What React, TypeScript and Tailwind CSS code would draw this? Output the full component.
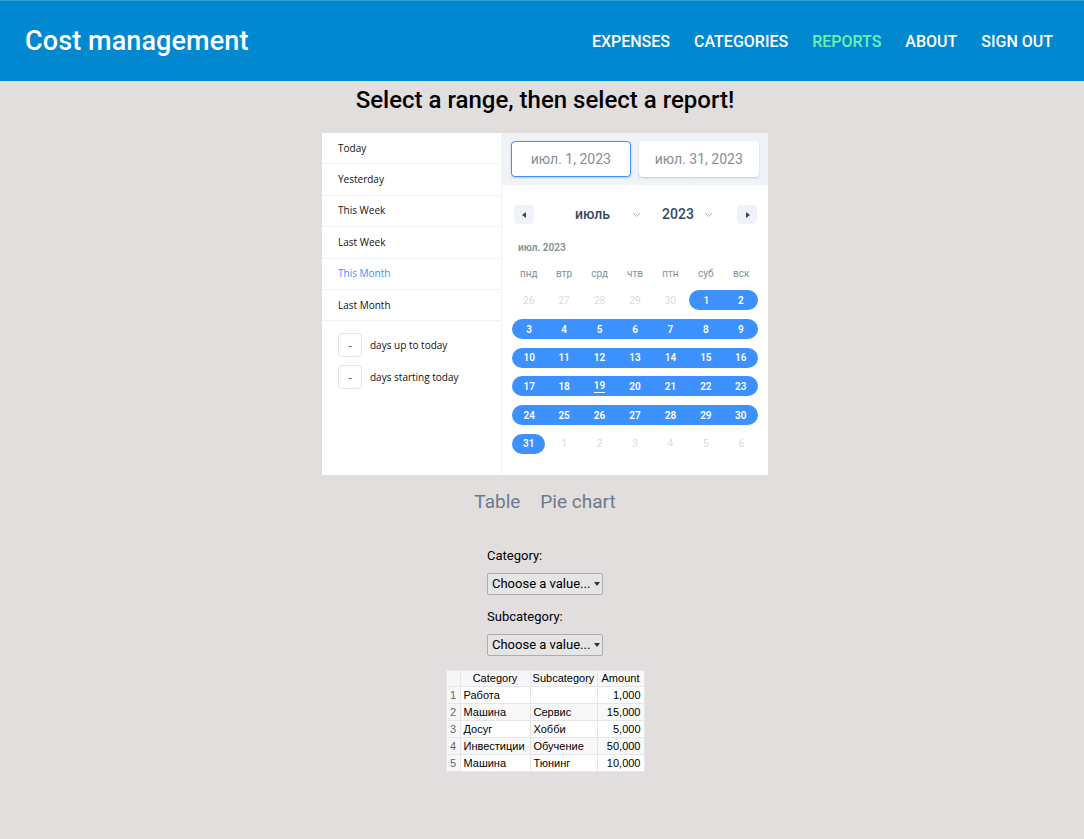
import React, { FC } from "react";

const navItems = ["EXPENSES", "CATEGORIES", "REPORTS", "ABOUT", "SIGN OUT"];
const staticRanges = ["Today", "Yesterday", "This Week", "Last Week", "This Month", "Last Month"];
const weekDays = ["пнд", "втр", "срд", "чтв", "птн", "суб", "вск"];

const rows = [
  { n: 1, cat: "Работа", sub: "", amount: "1,000" },
  { n: 2, cat: "Машина", sub: "Сервис", amount: "15,000" },
  { n: 3, cat: "Досуг", sub: "Хобби", amount: "5,000" },
  { n: 4, cat: "Инвестиции", sub: "Обучение", amount: "50,000" },
  { n: 5, cat: "Машина", sub: "Тюнинг", amount: "10,000" },
];

// 6 weeks, first week starts on jun 26
const days: { d: number; inMonth: boolean }[] = [];
for (let i = 26; i <= 30; i++) days.push({ d: i, inMonth: false });
for (let i = 1; i <= 31; i++) days.push({ d: i, inMonth: true });
for (let i = 1; i <= 6; i++) days.push({ d: i, inMonth: false });

const Header: FC = () => (
  <header className="h-[81px] bg-[#0288d1] border-t border-[#3aa3dc] flex items-center justify-between pl-[25px] pr-[31px]">
    <h1 className="text-white text-[27px] font-medium tracking-[0.1px]">Cost management</h1>
    <nav className="flex gap-[24px] pt-[1px]">
      {navItems.map((item) => (
        <span
          key={item}
          className={`text-[16px] font-medium ${item === "REPORTS" ? "text-[#69f0ae]" : "text-white"}`}
        >
          {item}
        </span>
      ))}
    </nav>
  </header>
);

const Arrow: FC<{ dir: "left" | "right" }> = ({ dir }) => (
  <div className="w-[20px] h-[19px] shrink-0 rounded-[4px] bg-[#eff2f7] flex items-center justify-center">
    <svg width="5" height="6" viewBox="0 0 5 6">
      {dir === "left" ? <path d="M4 0 L0 3 L4 6 Z" fill="#34495e" /> : <path d="M1 0 L5 3 L1 6 Z" fill="#34495e" />}
    </svg>
  </div>
);

const Chevron: FC<{ className: string }> = ({ className }) => (
  <svg width="9" height="6" viewBox="0 0 9 6" className={className}>
    <path d="M1 1 L4.5 4.5 L8 1" stroke="#a4aeb8" strokeWidth="1" fill="none" />
  </svg>
);

const Calendar: FC = () => (
  <div className="w-[266px] shrink-0 flex flex-col">
    <div className="h-[52px] bg-[#eff2f7] flex items-center gap-[8px] px-[9px]">
      <div className="w-[120px] h-[36px] rounded-[4px] bg-white border border-[#3d91ff] flex items-center justify-center text-[14px] text-[#849095] shadow-[0_1px_2px_rgba(35,57,66,0.21)]">
        июл. 1, 2023
      </div>
      <div className="w-[121px] h-[36px] rounded-[4px] bg-white flex items-center justify-center text-[14px] text-[#849095] shadow-[0_1px_2px_rgba(35,57,66,0.21)]">
        июл. 31, 2023
      </div>
    </div>
    <div className="flex items-center pl-[12px] pr-[11px] mt-[20px] h-[19px]">
      <Arrow dir="left" />
      <div className="flex items-center ml-[41px]">
        <span className="text-[14px] font-medium text-[#34495e]">июль</span>
        <Chevron className="ml-[22px]" />
        <span className="text-[14px] font-medium text-[#34495e] ml-[21px]">2023</span>
        <Chevron className="ml-[10px]" />
      </div>
      <div className="ml-auto">
        <Arrow dir="right" />
      </div>
    </div>
    <div className="px-[9px]">
      <div className="text-[10px] font-semibold text-[#849095] pl-[7px] mt-[17px] leading-[14px]">июл. 2023</div>
      <div className="grid grid-cols-7 mt-[12px]">
        {weekDays.map((w) => (
          <div key={w} className="text-center text-[10px] text-[#849095] leading-[14px]">
            {w}
          </div>
        ))}
      </div>
      <div className="grid grid-cols-7 mt-[5px]">
        {days.map((day, i) => {
          const col = i % 7;
          const first = day.inMonth && (col === 0 || day.d === 1);
          const last = day.inMonth && (col === 6 || day.d === 31);
          return (
            <div key={i} className="h-[28.7px] flex items-center">
              <div
                className={`w-full h-[20px] flex items-center justify-center text-[10px] ${
                  day.inMonth ? "bg-[#3d91ff] text-white font-semibold" : "text-[#d5dce0]"
                } ${first ? "rounded-l-full ml-[1px]" : ""} ${last ? "rounded-r-full mr-[1px]" : ""}`}
              >
                <span className={day.inMonth && day.d === 19 ? "border-b border-white leading-[12px]" : ""}>{day.d}</span>
              </div>
            </div>
          );
        })}
      </div>
    </div>
  </div>
);

const DateRangePicker: FC = () => (
  <div className="w-[446px] h-[342px] bg-white flex" style={{ fontFamily: "Roboto, sans-serif" }}>
    <div className="w-[180px] shrink-0 border-r border-[#eff2f7] flex flex-col" style={{ fontFamily: "'Open Sans', sans-serif" }}>
      {staticRanges.map((r) => (
        <div
          key={r}
          className={`h-[31.4px] border-b border-[#eff2f7] flex items-center pl-[16px] text-[10px] ${
            r === "This Month" ? "text-[#3d91ff]" : "text-[#111]"
          }`}
        >
          {r}
        </div>
      ))}
      <div className="flex flex-col gap-[8px] pt-[12px] pl-[16px]">
        {["days up to today", "days starting today"].map((t) => (
          <div key={t} className="flex items-center">
            <div className="w-[24px] h-[24px] rounded-[4px] border border-[#dee7eb] flex items-center justify-center text-[10px] text-[#333]">
              -
            </div>
            <span className="ml-[8px] text-[10px] text-[#111]">{t}</span>
          </div>
        ))}
      </div>
    </div>
    <Calendar />
  </div>
);

const Field: FC<{ label: string }> = ({ label }) => (
  <div className="flex flex-col">
    <span className="text-[13px] text-black leading-[18px]">{label}</span>
    <div className="mt-[8px] w-[116px] h-[22px] bg-[#e5e5e5] border border-[#adadad] rounded-[2px] flex items-center pl-[4px] text-[13px] text-black">
      Choose a value...
      <svg width="6" height="4" viewBox="0 0 6 4" className="ml-[4px]">
        <path d="M0 0 L6 0 L3 4 Z" fill="#333" />
      </svg>
    </div>
  </div>
);

const ReportTable: FC = () => (
  <table
    className="border-collapse table-fixed text-[11px] leading-[15px] bg-white w-[198px]"
    style={{ fontFamily: "'Liberation Sans', Arial, sans-serif" }}
  >
    <colgroup>
      <col className="w-[14px]" />
      <col className="w-[70px]" />
      <col className="w-[67px]" />
      <col className="w-[47px]" />
    </colgroup>
    <thead>
      <tr className="h-[16px] bg-[#f7f7f9]">
        <th className="border border-[#e6e6e6] font-normal p-0"></th>
        <th className="border border-[#e6e6e6] font-normal text-center p-0">Category</th>
        <th className="border border-[#e6e6e6] font-normal text-center p-0 whitespace-nowrap">Subcategory</th>
        <th className="border border-[#e6e6e6] font-normal text-center p-0">Amount</th>
      </tr>
    </thead>
    <tbody>
      {rows.map((r) => (
        <tr key={r.n} className={`h-[17px] ${r.n % 2 === 0 ? "bg-[#f8f8f8]" : "bg-white"}`}>
          <td className="border border-[#e6e6e6] bg-[#f7f7f9] text-center text-[#666] p-0">{r.n}</td>
          <td className="border border-[#e6e6e6] px-[3px] py-0 text-black whitespace-nowrap">{r.cat}</td>
          <td className="border border-[#e6e6e6] px-[3px] py-0 text-black whitespace-nowrap">{r.sub}</td>
          <td className="border border-[#e6e6e6] px-[3px] py-0 text-right text-black">{r.amount}</td>
        </tr>
      ))}
    </tbody>
  </table>
);

const App: FC = () => (
  <div className="min-h-[839px] bg-[#e3dede]" style={{ fontFamily: "Roboto, sans-serif" }}>
    <Header />
    <main className="flex flex-col items-center pl-[6px]">
      <h2 className="mt-[3px] text-[24px] font-medium text-black leading-[32px]">
        Select a range, then select a report!
      </h2>
      <div className="mt-[17px]">
        <DateRangePicker />
      </div>
      <div className="mt-[14px] flex gap-[20px] text-[19px] text-[#6c7a8a] leading-[26px]">
        <span>Table</span>
        <span>Pie chart</span>
      </div>
      <div className="mt-[32px] flex flex-col gap-[13px] w-[116px]">
        <Field label="Category:" />
        <Field label="Subcategory:" />
      </div>
      <div className="mt-[14px]">
        <ReportTable />
      </div>
    </main>
  </div>
);

export default App;
